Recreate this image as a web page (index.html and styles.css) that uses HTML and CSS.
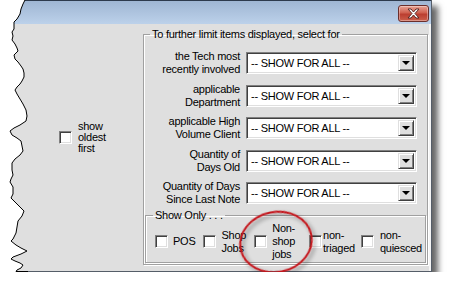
FILE: index.html
```html
<!DOCTYPE html>
<html lang="en">
<head>
    <meta charset="UTF-8">
    <title>Filter options</title>
    <link rel="stylesheet" href="styles.css">
</head>
<body>
    <div class="window">
        <div class="titlebar">
            <button class="close" title="Close">
                <svg width="15" height="11" viewBox="0 0 15 11">
                    <path d="M2 1h3l2.5 3 2.5-3h3l-4 4.5 4 4.5h-3L7.5 7 5 10H2l4-4.5z" fill="#fff" stroke="#5a2a28" stroke-width="1"/>
                </svg>
            </button>
        </div>

        <div class="client">
            <div class="side">
                <label class="check">
                    <span class="box"></span>
                    <span class="txt">show<br>oldest<br>first</span>
                </label>
            </div>

            <fieldset class="group filters">
                <legend>To further limit items displayed, select for</legend>
                <div class="rows">
                    <div class="lbl">the Tech most<br>recently involved</div>
                    <div class="combo"><span>-- SHOW FOR ALL --</span><i class="arrow"></i></div>

                    <div class="lbl">applicable<br>Department</div>
                    <div class="combo"><span>-- SHOW FOR ALL --</span><i class="arrow"></i></div>

                    <div class="lbl">applicable High<br>Volume Client</div>
                    <div class="combo"><span>-- SHOW FOR ALL --</span><i class="arrow"></i></div>

                    <div class="lbl">Quantity of<br>Days Old</div>
                    <div class="combo"><span>-- SHOW FOR ALL --</span><i class="arrow"></i></div>

                    <div class="lbl">Quantity of Days<br>Since Last Note</div>
                    <div class="combo"><span>-- SHOW FOR ALL --</span><i class="arrow"></i></div>
                </div>

                <fieldset class="group only">
                    <legend>Show Only . . .</legend>
                    <div class="opts">
                        <label class="check pos"><span class="box"></span><span class="txt">POS</span></label>
                        <label class="check shop"><span class="box"></span><span class="txt">Shop<br>Jobs</span></label>
                        <label class="check nonshop"><span class="box"></span><span class="txt">Non-<br>shop<br>jobs</span></label>
                        <label class="check triaged"><span class="box"></span><span class="txt">non-<br>triaged</span></label>
                        <label class="check quiesced"><span class="box"></span><span class="txt">non-<br>quiesced</span></label>
                    </div>
                </fieldset>
            </fieldset>
        </div>

        <!-- torn left edge of the screenshot -->
        <svg class="torn" width="30" height="289" viewBox="0 0 30 289">
            <polygon fill="#fff" points="0,0 25,0 23,4 21,9 20,14 17,19 14,22 14,29 12,32 13,36 12,40 15,44 17,48 18,51 14,55 15,59 18,62 21,66 23,69 24,73 24,77 22,81 20,84 17,87 15,90 17,94 20,99 23,104 26,110 27,116 26,121 20,125 14,128 10,131 12,135 17,138 21,141 22,146 23,151 20,155 15,159 12,163 12,170 13,175 11,179 10,182 13,187 13,194 11,198 15,202 19,206 24,211 22,216 18,221 17,227 16,233 13,239 11,241 16,245 21,248 27,251 21,254 13,257 11,259 15,261 20,263 23,265 21,268 17,270 16,272 28,273 30,289 0,289"/>
            <polyline fill="none" stroke="#000" stroke-width="1" points="25,0 23,4 21,9 20,14 17,19 14,22 14,29 12,32 13,36 12,40 15,44 17,48 18,51 14,55 15,59 18,62 21,66 23,69 24,73 24,77 22,81 20,84 17,87 15,90 17,94 20,99 23,104 26,110 27,116 26,121 20,125 14,128 10,131 12,135 17,138 21,141 22,146 23,151 20,155 15,159 12,163 12,170 13,175 11,179 10,182 13,187 13,194 11,198 15,202 19,206 24,211 22,216 18,221 17,227 16,233 13,239 11,241 16,245 21,248 27,251 21,254 13,257 11,259 15,261 20,263 23,265 21,268 17,270 16,271.5 28,271.5"/>
        </svg>

        <!-- red annotation ring -->
        <svg class="ring" width="90" height="80" viewBox="0 0 90 80">
            <defs>
                <filter id="soft" x="-20%" y="-20%" width="150%" height="150%">
                    <feDropShadow dx="2" dy="3" stdDeviation="2" flood-color="#000" flood-opacity="0.45"/>
                </filter>
            </defs>
            <ellipse cx="41" cy="35" rx="36" ry="30" transform="rotate(-12 41 35)" fill="none" stroke="#c4161c" stroke-width="2" filter="url(#soft)"/>
        </svg>
    </div>
</body>
</html>
```

FILE: styles.css
```css
body {
    margin: 0;
    background: #fff;
    font-family: "Liberation Sans", Arial, sans-serif;
    font-size: 11px;
    letter-spacing: -0.25px;
    color: #000;
}
.window {
    position: relative;
    width: 431px;
    height: 271px;
    background: #dfdfdf;
    border-right: 1px solid #555d68;
    border-bottom: 1px solid #555d68;
    box-shadow: 6px 6px 6px rgba(0, 0, 0, 0.6);
}
.titlebar {
    height: 24px;
    border-top: 1px solid #2d3a4c;
    background: linear-gradient(#9fb6d3, #bcd1ea);
    display: flex;
    justify-content: flex-end;
    padding: 4px 2px 0 0;
    box-sizing: border-box;
}
.close {
    width: 31px;
    height: 17px;
    padding: 0;
    border: 1px solid #6b2f2c;
    border-radius: 3px;
    background: linear-gradient(#e8a496, #d0604f 45%, #bb3e30 55%, #cc5f4b);
    box-shadow: inset 0 0 0 1px rgba(255, 255, 255, 0.35);
    display: flex;
    align-items: center;
    justify-content: center;
}
.client {
    display: flex;
    height: 247px;
    border-right: 2px solid #f4f4f4;
    box-sizing: border-box;
}
.side {
    width: 143px;
    padding: 97px 0 0 59px;
    box-sizing: border-box;
}
.check {
    display: flex;
    align-items: center;
}
.box {
    flex: none;
    width: 13px;
    height: 13px;
    box-sizing: border-box;
    background: #fff;
    border: 1px solid;
    border-color: #808080 #fff #fff #808080;
    box-shadow: inset 1px 1px 0 #404040, inset -1px -1px 0 #dfdfdf;
}
.txt {
    line-height: 11px;
    margin-left: 6px;
}
.group {
    margin: 0;
    padding: 0;
    border: 1px solid #a0a0a0;
    box-shadow: inset 1px 1px 0 #fff, 1px 1px 0 #fff;
}
.group legend {
    padding: 0 2px;
    line-height: 13px;
}
.filters {
    width: 285px;
    height: 237px;
    margin-top: 4px;
    box-sizing: border-box;
}
.filters > legend {
    margin-left: 6px;
}
.rows {
    display: grid;
    grid-template-columns: 96px 171px;
    grid-auto-rows: 22px;
    column-gap: 6px;
    row-gap: 10.5px;
    margin-top: 11px;
}
.lbl {
    text-align: right;
    line-height: 13px;
    align-self: center;
}
.combo {
    display: flex;
    align-items: center;
    background: #fff;
    border: 1px solid;
    border-color: #808080 #fff #fff #808080;
    box-shadow: inset 1px 1px 0 #404040, inset -1px -1px 0 #dfdfdf;
    padding: 0 2px 0 4px;
}
.combo span {
    flex: 1;
}
.arrow {
    width: 16px;
    height: 16px;
    box-sizing: border-box;
    background: #dfdfdf;
    border: 1px solid;
    border-color: #dfdfdf #404040 #404040 #dfdfdf;
    box-shadow: inset 1px 1px 0 #fff, inset -1px -1px 0 #808080;
    display: flex;
    align-items: center;
    justify-content: center;
}
.arrow::before {
    content: "";
    border: 4px solid transparent;
    border-top: 4px solid #000;
    border-bottom: 0;
}
.only {
    margin: 5px 1px 0 1px;
    height: 54px;
    box-sizing: border-box;
}
.only > legend {
    margin-left: 7px;
}
.opts {
    display: flex;
    align-items: center;
    height: 39px;
    padding-left: 9px;
}
.opts .txt {
    line-height: 13px;
    margin-left: 5px;
}
.pos { margin-right: 8px; }
.shop { margin-right: 8px; }
.nonshop { margin-right: 14px; }
.triaged { margin-right: 6px; }
.triaged .txt { margin-left: 1px; }
.quiesced .txt { margin-left: 6px; }
.torn {
    position: absolute;
    left: 0;
    top: 0;
}
.ring {
    position: absolute;
    left: 235px;
    top: 207px;
}
```
